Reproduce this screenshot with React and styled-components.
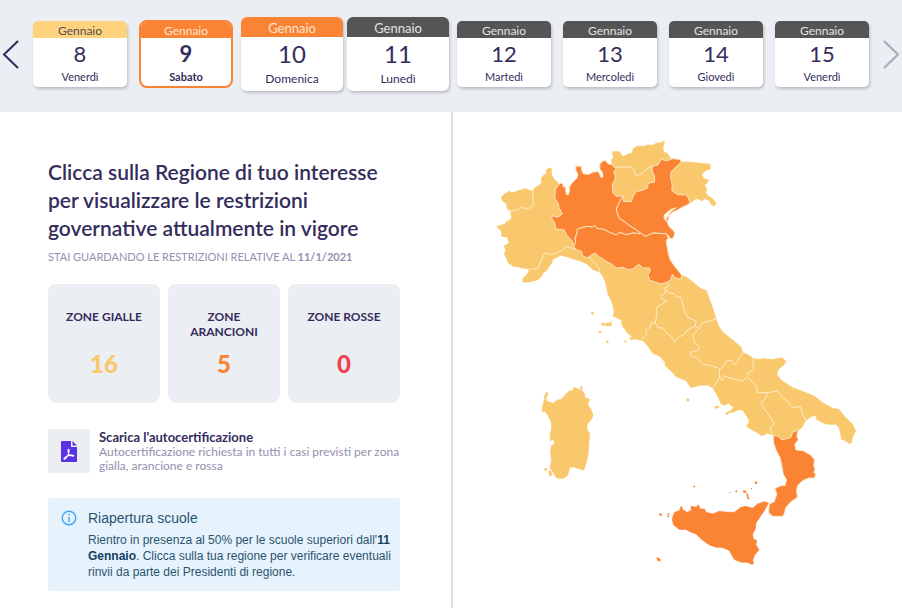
import React, { useState } from "react";
import styled, { createGlobalStyle, css } from "styled-components";

const GlobalStyle = createGlobalStyle`
  *, *::before, *::after { box-sizing: border-box; }
  body {
    margin: 0;
    background: #fff;
    color: #342c5c;
    font-family: Lato, "Open Sans", sans-serif;
  }
  h1, h2, p { margin: 0; }
  button { font: inherit; color: inherit; }
`;

const colors = {
  yellow: "#f9c86c",
  orange: "#fa8334",
  red: "#ee4350",
  ink: "#342c5c",
  muted: "#948fae",
  panel: "#ebeef3",
};

const Page = styled.div`
  display: flex;
  flex-direction: column;
  min-height: 100vh;
`;

const DateBar = styled.nav`
  display: flex;
  align-items: center;
  height: 112px;
  padding-bottom: 4px;
  background: ${colors.panel};
`;

const ArrowButton = styled.button`
  display: flex;
  flex: none;
  align-items: center;
  justify-content: center;
  width: 27px;
  height: 40px;
  padding: 0 5px 0 0;
  border: 0;
  background: none;
  color: ${colors.ink};
  cursor: pointer;

  &:disabled {
    padding: 0 0 0 4px;
    color: #a9a9bb;
    cursor: default;
  }
`;

const Days = styled.div`
  display: grid;
  flex: 1;
  grid-template-columns: repeat(8, 1fr);
  align-items: center;
`;

const DayCard = styled.button`
  display: flex;
  flex-direction: column;
  height: ${(p) => (p.$large ? 74 : 66)}px;
  margin: 0 ${(p) => (p.$large ? 2 : 6)}px;
  padding: 0;
  overflow: hidden;
  border: 0;
  border-radius: ${(p) => (p.$large ? 6 : 5)}px;
  background: #fff;
  box-shadow: 1px 2px 3px rgba(60, 60, 80, 0.28);
  text-align: center;
  cursor: pointer;
  ${(p) =>
    p.$selected &&
    css`
      height: 68px;
      border: 2px solid ${colors.orange};
      border-radius: 8px;
      box-shadow: none;
      font-weight: 700;
    `}
`;

const tones = {
  yellow: { bg: "#ffd27e", fg: "#5b4a55" },
  orange: { bg: colors.orange, fg: "#fde3d2" },
  grey: { bg: "#555555", fg: "#e2e2e4" },
};

const Month = styled.span`
  width: 100%;
  height: ${(p) => (p.$large ? 20 : p.$selected ? 16 : 17)}px;
  background: ${(p) => tones[p.$tone].bg};
  color: ${(p) => tones[p.$tone].fg};
  font-size: ${(p) => (p.$large ? 13 : 12)}px;
  font-weight: 400;
  line-height: ${(p) => (p.$large ? 22 : p.$selected ? 18 : 20)}px;
`;

const DayNumber = styled.span`
  width: 100%;
  font-size: ${(p) => (p.$large ? 24 : 22)}px;
  line-height: ${(p) => (p.$large ? 34 : 31)}px;
`;

const Weekday = styled.span`
  width: 100%;
  font-size: ${(p) => (p.$large ? 12 : 11)}px;
  line-height: 15px;
`;

const Main = styled.main`
  display: grid;
  flex: 1;
  grid-template-columns: 1fr 1fr;
`;

const InfoColumn = styled.section`
  padding: 46px 51px 17px 48px;
`;

const MapColumn = styled.section`
  padding: 18px 33px 0 37px;
  border-left: 2px solid #dcdee6;
`;

const Title = styled.h1`
  font-size: 21px;
  font-weight: 600;
  line-height: 28px;
`;

const Subtitle = styled.p`
  margin-top: 8px;
  color: ${colors.muted};
  font-size: 11px;
  line-height: 14px;
  white-space: nowrap;
`;

const Zones = styled.div`
  display: grid;
  grid-template-columns: repeat(3, 1fr);
  gap: 8px;
  margin-top: 20px;
`;

const ZoneBox = styled.div`
  display: flex;
  flex-direction: column;
  align-items: center;
  height: 119px;
  padding-top: 25px;
  border-radius: 8px;
  background: ${colors.panel};
  text-align: center;
`;

const ZoneLabel = styled.h2`
  width: 80px;
  height: 40px;
  font-size: 12px;
  font-weight: 700;
  line-height: 15px;
`;

const ZoneCount = styled.p`
  color: ${(p) => p.$color};
  font-size: 24px;
  font-weight: 900;
  line-height: 30px;
`;

const Download = styled.a`
  display: flex;
  gap: 9px;
  margin-top: 26px;
  color: inherit;
  text-decoration: none;
`;

const FileTile = styled.span`
  display: flex;
  flex: none;
  align-items: center;
  justify-content: center;
  width: 42px;
  height: 44px;
  border-radius: 2px;
  background: ${colors.panel};
`;

const DownloadText = styled.span`
  display: flex;
  flex-direction: column;
  color: ${colors.muted};
  font-size: 12px;
  line-height: 14px;
`;

const DownloadTitle = styled.strong`
  color: ${colors.ink};
  font-size: 13px;
  line-height: 16px;
`;

const Notice = styled.aside`
  display: grid;
  grid-template-columns: 16px 1fr;
  column-gap: 11px;
  margin-top: 25px;
  padding: 10px 4px 11px 13px;
  border-radius: 3px;
  background: #e6f3fd;
  color: #2b536f;
  font-family: "Liberation Sans", Arial, sans-serif;
`;

const NoticeTitle = styled.h2`
  font-size: 14px;
  font-weight: 400;
  line-height: 20px;
`;

const NoticeText = styled.p`
  margin-top: 4px;
  font-size: 12px;
  line-height: 16px;

  strong { color: #123e5f; }
`;

const NoticeIcon = styled.svg`
  display: block;
  margin-top: 2px;
`;

const MapDrawing = styled.svg`
  display: block;
  width: 100%;
  height: auto;
`;

const days = [
  { day: 8, name: "Venerdì", tone: "yellow" },
  { day: 9, name: "Sabato", tone: "orange" },
  { day: 10, name: "Domenica", tone: "orange", large: true },
  { day: 11, name: "Lunedì", tone: "grey", large: true },
  { day: 12, name: "Martedì", tone: "grey" },
  { day: 13, name: "Mercoledì", tone: "grey" },
  { day: 14, name: "Giovedì", tone: "grey" },
  { day: 15, name: "Venerdì", tone: "grey" },
];

const zones = [
  { label: "ZONE GIALLE", count: 16, color: colors.yellow },
  { label: "ZONE ARANCIONI", count: 5, color: colors.orange },
  { label: "ZONE ROSSE", count: 0, color: colors.red },
];

const peninsula =
  "35,200 47,190 52,189 58,183 63,188 72,188 88,181 97,180 105,176 118,181 130,184 133,175 148,166 157,157 153,150 160,137 171,130 168,122 178,114 186,117 184,132 192,147 203,158 207,164 212,220 370,190 370,108 367,100 365,88 372,85 368,66 380,64 392,67 394,75 402,80 415,72 427,70 430,58 440,50 452,48 462,50 473,45 488,46 500,40 515,38 525,33 523,42 520,52 522,66 533,70 540,80 544,88 575,96 605,97 630,100 662,103 663,117 648,122 637,133 643,147 657,150 652,160 645,165 652,178 648,188 658,200 670,207 680,222 675,228 667,226 660,212 645,206 638,214 625,206 615,210 605,218 520,250 500,400 560,448 575,437 590,442 610,457 635,478 650,482 655,495 660,510 670,535 680,568 685,585 700,608 730,632 755,653 760,670 775,675 793,688 810,690 825,688 850,690 878,685 890,695 885,705 867,720 863,735 875,752 910,775 950,790 975,800 1000,820 1030,837 1050,840 1065,860 1090,885 1100,905 1090,925 1088,940 1080,943 1070,935 1057,930 1055,915 1050,895 1040,885 1015,885 995,878 980,868 983,860 970,860 950,873 938,895 926,905 910,910 905,925 878,932 865,920 853,918 835,912 818,920 800,908 788,902 772,892 780,875 772,860 760,842 745,842 735,848 720,850 715,855 708,855 714,848 726,844 732,835 718,822 704,828 695,823 685,800 670,775 655,768 630,768 605,775 590,755 580,750 560,742 545,725 528,710 526,698 510,680 490,672 475,650 460,633 435,628 425,632 420,626 430,622 415,612 400,592 395,582 397,572 375,562 370,560 374,545 370,530 364,510 355,495 348,460 340,440 330,427 310,420 290,402 270,393 250,388 235,382 213,377 190,388 185,400 168,425 160,430 155,440 145,450 120,457 100,458 98,448 115,430 118,418 95,415 85,411 70,410 55,400 50,385 43,375 47,362 43,348 58,340 52,322 35,320 35,305 20,290 45,283 50,276 62,270 65,262 62,252 65,243 52,238 50,222 40,215 35,208";

const lombardia =
  "207,164 212,160 219,161 220,170 228,173 228,186 230,194 236,194 239,184 238,172 244,163 254,152 263,143 264,132 258,120 258,109 275,109 276,122 281,132 298,133 309,127 323,125 329,130 333,142 340,142 338,127 331,119 330,104 338,94 348,92 355,102 366,103 370,108 380,117 372,125 378,145 372,155 368,165 370,190 380,200 400,198 388,220 380,238 388,265 400,272 420,288 440,300 455,312 430,310 410,315 390,308 380,316 360,308 343,299 328,297 320,295 315,287 308,292 295,290 275,294 265,298 262,310 256,325 258,338 252,350 248,335 232,318 222,300 198,298 195,280 185,265 188,258 205,262 218,252 208,235 205,220 195,205 196,180";

const veneto =
  "400,198 402,215 425,215 430,200 440,185 458,182 475,173 475,160 495,157 495,140 487,120 490,108 505,105 515,88 530,93 544,88 550,86 565,88 573,89 575,96 565,105 545,125 543,140 548,165 547,183 565,195 592,195 598,208 602,220 592,226 575,234 560,243 548,248 540,256 536,266 536,272 530,275 530,266 545,245 560,234 545,238 530,250 523,258 524,268 533,275 535,282 540,292 552,303 556,312 551,325 543,328 537,318 530,312 490,310 468,320 455,312 440,300 420,288 400,272 388,265 380,238 388,220";

const emilia =
  "252,350 258,338 256,325 262,310 262,298 275,294 295,290 308,292 315,287 320,295 328,297 343,299 360,308 380,316 390,308 410,315 430,310 455,312 468,320 490,310 530,312 536,324 530,335 533,352 537,375 542,390 555,410 575,434 576,446 566,448 554,443 550,435 545,440 545,448 535,457 515,463 495,457 480,452 475,435 482,425 480,415 460,415 450,405 440,408 430,418 415,420 400,413 380,415 365,403 350,395 330,382 315,370 302,378 292,385 278,378 276,365 260,360";

const calabria =
  "927,902 923,920 927,932 917,945 920,962 942,965 965,978 976,992 974,1010 978,1020 974,1030 980,1035 976,1047 958,1047 940,1055 925,1070 922,1085 925,1105 905,1118 890,1135 885,1155 880,1162 850,1162 838,1150 840,1125 855,1118 863,1095 857,1078 875,1070 887,1070 892,1052 882,1035 878,1010 872,985 860,962 853,940 852,920 865,920 878,932 905,925 910,910";

const sicilia =
  "95,262 100,272 112,280 125,275 125,262 140,265 147,257 152,270 165,270 170,280 190,285 210,277 235,280 255,280 275,265 290,262 310,268 325,255 345,248 357,252 345,275 320,312 318,330 310,345 312,360 322,365 320,378 329,392 315,410 310,425 313,435 306,436 295,430 275,430 255,422 240,395 220,386 200,385 180,378 155,360 140,345 125,340 108,331 90,332 72,318 68,300 75,280 90,275";

const sardegna =
  "38,95 45,72 42,68 52,53 54,60 48,72 52,82 70,87 82,78 95,75 115,52 130,48 132,38 140,42 150,46 158,50 165,60 165,70 178,75 174,90 183,105 190,122 185,135 172,150 172,165 180,178 178,200 175,240 170,265 162,288 145,283 130,278 118,280 118,290 112,305 100,313 80,312 70,295 60,280 65,262 62,235 65,215 73,210 73,195 62,200 60,180 65,165 65,145 55,125 45,110 38,114";

const borders = [
  "65,243 85,240 95,232 105,236 125,234 132,222 128,205 130,184",
  "118,418 135,418 145,415 152,395 165,370 185,375 205,367 218,362 230,350 245,356 260,360",
  "300,378 302,388 315,400 325,412 332,427",
  "377,113 395,110 410,113 420,108 432,118 440,138 455,132 475,115 490,108",
  "535,460 538,470 525,475 528,490 515,498 517,508 532,515 520,522 500,535 502,555 497,580 485,580 480,595 468,605 472,615 458,628",
  "528,480 540,490 555,493 562,502 572,502 578,515 585,545 595,565 610,570 620,575 617,590",
  "497,580 505,595 520,595 535,615 545,620 555,637 570,622 585,615 595,600 617,590 630,597 640,580 660,575 680,568",
  "630,597 620,605 610,620 615,640 630,652 628,662 602,668 605,678 625,688 640,705 660,708 688,716 690,720 705,710 710,695 725,692 735,708 745,695 760,670",
  "690,720 690,740 685,755 672,773",
  "690,740 697,755 705,740 730,748 760,755 775,742 778,728 795,720 790,705 793,688",
  "775,742 790,760 802,770 805,790 835,790 828,810 815,818 825,840 840,860 855,885 842,895 850,915",
  "835,790 865,785 880,805 895,815 910,835 935,832 940,855 950,873",
];

const Coast = styled.polygon`
  fill: ${(p) => p.$fill};
  stroke: ${(p) => p.$fill};
  stroke-width: 2;
  stroke-linejoin: round;
`;

const OrangeRegion = styled.polygon`
  fill: ${colors.orange};
  stroke: #fde3c4;
  stroke-width: 3;
  stroke-linejoin: round;
`;

const Border = styled.polyline`
  fill: none;
  stroke: #fdebca;
  stroke-width: 3;
  stroke-linejoin: round;
`;

function Italy() {
  return (
    <MapDrawing viewBox="0 0 1140 1320" role="img" aria-label="Mappa delle regioni italiane">
      <Coast points={peninsula} $fill={colors.yellow} />
      {borders.map((points) => (
        <Border key={points} points={points} />
      ))}
      {[lombardia, veneto, emilia, calabria].map((points) => (
        <OrangeRegion key={points} points={points} />
      ))}
      <g fill={colors.yellow}>
        <path d="M335 580l10 2 16-3 4-7v18l-6-2-5 3-6-4-12 2z" />
        <circle cx="308" cy="551" r="4" />
        <circle cx="331" cy="608" r="4" />
        <circle cx="353" cy="637" r="4" />
        <path d="M403 632l6 2 2 7-5-2z" />
        <circle cx="595" cy="812" r="5" />
        <path d="M674 832l12-3 4 5-10 5z" />
      </g>
      <g transform="translate(120 735)">
        <Coast points={sardegna} $fill={colors.yellow} />
        <path
          d="M150 35l8 2 1 8-5 2zM172 74l10 1-1 4-8-1zM43 283l8-1 2 6-8 3zM56 290l8 1 3 12-7 4-4-8z"
          fill={colors.yellow}
        />
      </g>
      <g transform="translate(480 870)" fill={colors.orange}>
        <Coast points={sicilia} $fill={colors.orange} />
        <path d="M20 416l8 1 6 5-2 6-8-2zM281 214l9 1 1 7-9-1zM291 223l6 2v8l5 8-7-1-3-9z" />
        <circle cx="320" cy="191" r="4" />
        <circle cx="33" cy="287" r="4" />
        <circle cx="57" cy="285" r="3" />
        <circle cx="56" cy="292" r="3" />
        <circle cx="134" cy="202" r="3" />
        <circle cx="261" cy="217" r="3" />
        <circle cx="242" cy="220" r="2" />
        <circle cx="306" cy="209" r="2" />
      </g>
    </MapDrawing>
  );
}

export default function App() {
  const [selected, setSelected] = useState(9);
  return (
    <Page>
      <GlobalStyle />
      <DateBar aria-label="Giorni">
        <ArrowButton aria-label="Giorni precedenti">
          <svg width="16" height="29" viewBox="0 0 16 29" fill="none" stroke="currentColor" strokeWidth="2">
            <path d="M15 1 1 14.500 15 28" />
          </svg>
        </ArrowButton>
        <Days>
          {days.map((d) => (
            <DayCard
              key={d.day}
              $large={d.large}
              $selected={selected === d.day}
              aria-pressed={selected === d.day}
              onClick={() => setSelected(d.day)}
            >
              <Month $tone={d.tone} $large={d.large} $selected={selected === d.day}>Gennaio</Month>
              <DayNumber $large={d.large}>{d.day}</DayNumber>
              <Weekday $large={d.large}>{d.name}</Weekday>
            </DayCard>
          ))}
        </Days>
        <ArrowButton aria-label="Giorni successivi" disabled>
          <svg width="16" height="29" viewBox="0 0 16 29" fill="none" stroke="currentColor" strokeWidth="2">
            <path d="M1 1 15 14.500 1 28" />
          </svg>
        </ArrowButton>
      </DateBar>
      <Main>
        <InfoColumn>
          <Title>Clicca sulla Regione di tuo interesse per visualizzare le restrizioni governative attualmente in vigore</Title>
          <Subtitle>
            STAI GUARDANDO LE RESTRIZIONI RELATIVE AL <strong>11/1/2021</strong>
          </Subtitle>
          <Zones>
            {zones.map((z) => (
              <ZoneBox key={z.label}>
                <ZoneLabel>{z.label}</ZoneLabel>
                <ZoneCount $color={z.color}>{z.count}</ZoneCount>
              </ZoneBox>
            ))}
          </Zones>
          <Download href="#autocertificazione">
            <FileTile>
              <svg width="16" height="21" viewBox="0 0 16 21" aria-hidden="true">
                <path d="M1 0h9v6h6v14q0 1-1 1H1q-1 0-1-1V1q0-1 1-1zM11.500 0 16 4.500h-4.500z" fill="#5a32e6" />
                <path
                  d="M7.300 8.500c-.7 2 .4 4.700 2.700 6 1.200.8 2.900.9 2.900.2 0-1-4.500-.8-7.400.8-2 1.100-3 2.500-2.200 2.800 1.300.4 4.200-4.500 4.800-8 .2-1.400-.4-2.400-.8-1.800z"
                  fill="none"
                  stroke="#fff"
                  strokeWidth="1.100"
                />
              </svg>
            </FileTile>
            <DownloadText>
              <DownloadTitle>Scarica l'autocertificazione</DownloadTitle>
              Autocertificazione richiesta in tutti i casi previsti per zona gialla, arancione e rossa
            </DownloadText>
          </Download>
          <Notice>
            <NoticeIcon width="16" height="16" viewBox="0 0 16 16" aria-hidden="true">
              <circle cx="8" cy="8" r="6.800" fill="none" stroke="#41a5f5" strokeWidth="1.400" />
              <path d="M8 7v5M8 4v1.600" stroke="#41a5f5" strokeWidth="1.500" />
            </NoticeIcon>
            <div>
              <NoticeTitle>Riapertura scuole</NoticeTitle>
              <NoticeText>
                Rientro in presenza al 50% per le scuole superiori dall'<strong>11 Gennaio</strong>. Clicca sulla tua
                regione per verificare eventuali rinvii da parte dei Presidenti di regione.
              </NoticeText>
            </div>
          </Notice>
        </InfoColumn>
        <MapColumn>
          <Italy />
        </MapColumn>
      </Main>
    </Page>
  );
}
